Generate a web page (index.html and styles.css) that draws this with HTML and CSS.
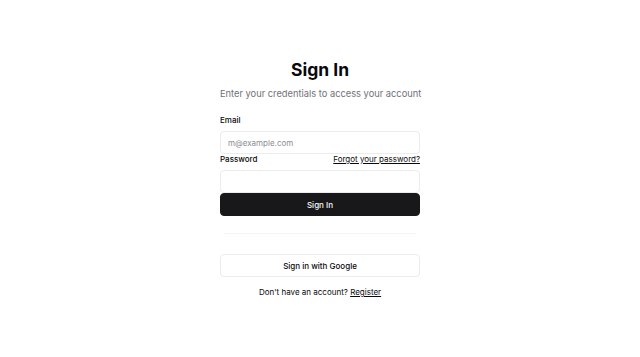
FILE: index.html
```html
<!DOCTYPE html>
<html lang="en">
<head>
  <meta charset="utf-8">
  <title>Sign In</title>
  <meta name="viewport" content="width=device-width, initial-scale=1">
  <link rel="stylesheet" href="styles.css">
</head>
<body>
  <div class="page">
    <div class="card">
      <h1>Sign In</h1>
      <p class="sub">Enter your credentials to access your account</p>

      <form class="form">
        <label class="label" for="email">Email</label>
        <input id="email" class="input" type="email" placeholder="m@example.com">

        <div class="row">
          <label class="label" for="password">Password</label>
          <a href="#" class="link">Forgot your password?</a>
        </div>
        <input id="password" class="input" type="password">

        <button type="button" class="btn btn-dark">Sign In</button>
      </form>

      <hr class="sep">

      <button type="button" class="btn btn-light">Sign in with Google</button>

      <p class="foot">Don't have an account? <a href="#" class="link">Register</a></p>
    </div>
  </div>
</body>
</html>
```

FILE: styles.css
```css
body {
  margin: 0;
  font-family: Inter, "Liberation Sans", sans-serif;
  color: #09090b;
  background: #ffffff;
}
.page {
  display: flex;
  justify-content: center;
  padding-top: 58px;
}
.card {
  width: 200px;
  text-align: center;
}
h1 {
  font-size: 17.5px;
  font-weight: 700;
  margin: 0;
  line-height: 24px;
}
.sub {
  font-size: 9.3px;
  color: #71717a;
  margin: 5px 0 0;
  line-height: 14px;
  white-space: nowrap;
}
.form {
  margin-top: 13px;
  text-align: left;
  display: flex;
  flex-direction: column;
}
.label {
  font-size: 8px;
  font-weight: 500;
  line-height: 12px;
}
.row {
  display: flex;
  justify-content: space-between;
  align-items: center;
  margin-top: -1px;
}
.link {
  color: #09090b;
  font-size: 8px;
  text-decoration: underline;
}
.input {
  box-sizing: border-box;
  height: 23px;
  margin-top: 5px;
  border: 1px solid #ececee;
  border-radius: 4px;
  padding: 0 7px;
  font-family: inherit;
  font-size: 8px;
  outline: none;
}
.input::placeholder {
  color: #8c8c94;
}
.btn {
  display: block;
  box-sizing: border-box;
  width: 100%;
  height: 23px;
  border-radius: 4px;
  font-family: inherit;
  font-size: 8px;
  font-weight: 500;
  cursor: pointer;
}
.btn-dark {
  margin-top: 0;
  background: #18181b;
  color: #fafafa;
  border: 1px solid #18181b;
}
.sep {
  border: 0;
  border-top: 1px solid #f4f4f5;
  margin: 17px 4px 20px;
}
.btn-light {
  background: #ffffff;
  color: #09090b;
  border: 1px solid #ececee;
}
.foot {
  font-size: 8px;
  margin: 9px 0 0;
  line-height: 12px;
}
```
